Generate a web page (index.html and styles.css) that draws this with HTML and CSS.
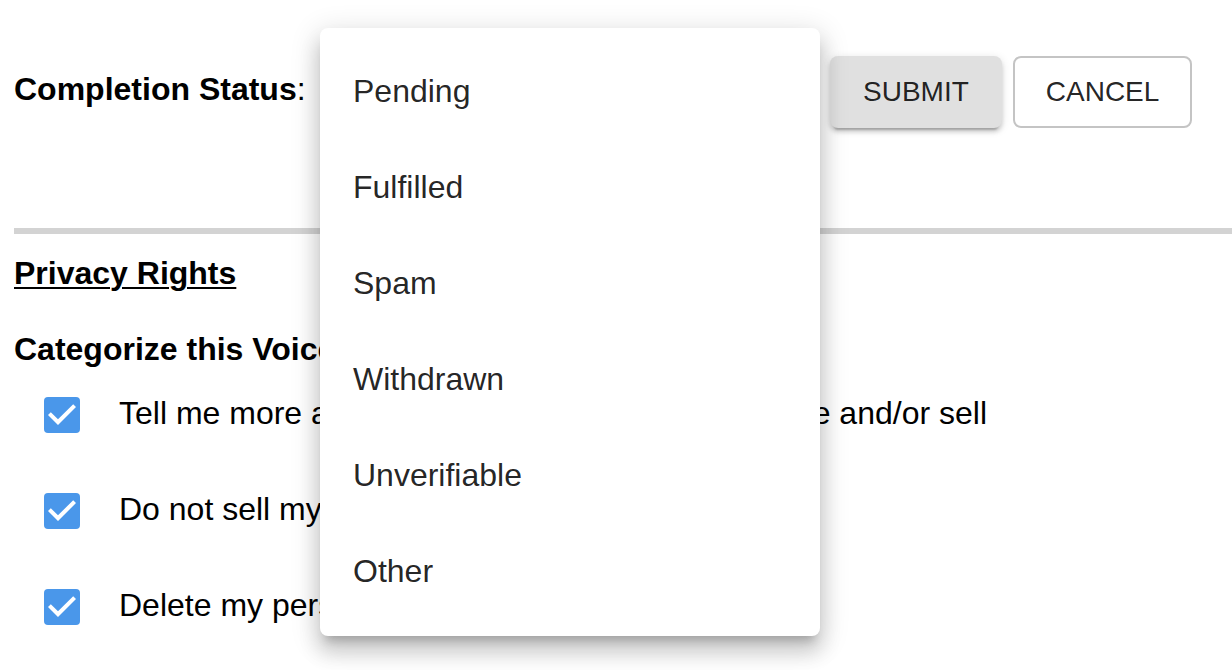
FILE: index.html
```html
<!DOCTYPE html>
<html lang="en">
<head>
<meta charset="utf-8">
<title>Completion Status</title>
<link rel="stylesheet" href="styles.css">
</head>
<body>
<div class="page">
  <div class="status-row">
    <div class="status-label"><strong>Completion Status</strong>:</div>
    <div class="select-slot"></div>
    <div class="actions">
      <button class="btn btn-contained">SUBMIT</button>
      <button class="btn btn-outlined">CANCEL</button>
    </div>
  </div>

  <hr class="divider">

  <h2 class="section-title">Privacy Rights</h2>
  <h3 class="sub-title">Categorize this Voice Request</h3>

  <ul class="checks">
    <li class="check-row">
      <svg class="checkbox" viewBox="0 0 24 24" width="48" height="48"><rect x="3" y="3" width="18" height="18" rx="2" fill="#4a97ea"/><path d="M10 17l-5-5 1.41-1.41L10 14.17l7.59-7.59L19 8l-9 9z" fill="#fff"/></svg>
      <span class="check-label">Tell me more about the information we collect, use and/or sell</span>
    </li>
    <li class="check-row">
      <svg class="checkbox" viewBox="0 0 24 24" width="48" height="48"><rect x="3" y="3" width="18" height="18" rx="2" fill="#4a97ea"/><path d="M10 17l-5-5 1.41-1.41L10 14.17l7.59-7.59L19 8l-9 9z" fill="#fff"/></svg>
      <span class="check-label">Do not sell my personal information</span>
    </li>
    <li class="check-row">
      <svg class="checkbox" viewBox="0 0 24 24" width="48" height="48"><rect x="3" y="3" width="18" height="18" rx="2" fill="#4a97ea"/><path d="M10 17l-5-5 1.41-1.41L10 14.17l7.59-7.59L19 8l-9 9z" fill="#fff"/></svg>
      <span class="check-label">Delete my personal information</span>
    </li>
  </ul>
</div>

<div class="menu">
  <ul class="menu-list">
    <li class="menu-item">Pending</li>
    <li class="menu-item">Fulfilled</li>
    <li class="menu-item">Spam</li>
    <li class="menu-item">Withdrawn</li>
    <li class="menu-item">Unverifiable</li>
    <li class="menu-item">Other</li>
  </ul>
</div>
</body>
</html>
```

FILE: styles.css
```css
html, body {
  margin: 0;
  padding: 0;
  background: #fff;
  overflow: hidden;
}

body {
  font-family: "Liberation Sans", Arial, sans-serif;
  color: #000;
  width: 1232px;
  height: 670px;
  position: relative;
}

.page {
  padding: 55px 0 0 14px;
}

.status-row {
  display: flex;
  align-items: center;
  height: 73px;
}

.status-label {
  font-size: 32px;
  width: 306px;
  padding-bottom: 4px;
}

.status-label strong {
  font-weight: 700;
}

.select-slot {
  width: 500px;
  height: 60px;
}

.actions {
  display: flex;
  align-items: center;
  gap: 11px;
  margin-left: 10px;
}

.btn {
  font-family: "Liberation Sans", Arial, sans-serif;
  font-size: 28px;
  line-height: 48px;
  color: rgba(0, 0, 0, 0.87);
  border-radius: 8px;
  cursor: pointer;
}

.btn-contained {
  background: #e0e0e0;
  border: none;
  padding: 12px 33px;
  box-shadow: 0 6px 2px -4px rgba(0,0,0,0.2), 0 4px 4px 0 rgba(0,0,0,0.14), 0 2px 10px 0 rgba(0,0,0,0.12);
}

.btn-outlined {
  background: #fff;
  border: 2px solid #c4c4c4;
  padding: 10px 31px;
}

.divider {
  margin: 100px 0 0 0;
  border: none;
  height: 6px;
  background: #d3d3d3;
}

.section-title {
  margin: 21px 0 0 0;
  font-size: 32px;
  font-weight: 700;
  text-decoration: underline;
  text-underline-offset: 3px;
  text-decoration-thickness: 2px;
  line-height: 36px;
}

.sub-title {
  margin: 40px 0 0 0;
  font-size: 32px;
  font-weight: 700;
  line-height: 36px;
}

.checks {
  list-style: none;
  margin: 0;
  padding: 0 0 0 24px;
}

.check-row {
  display: flex;
  align-items: center;
  height: 96px;
}

.checkbox {
  flex: none;
  display: block;
}

.check-label {
  margin-left: 33px;
  font-size: 32px;
  line-height: 36px;
  white-space: nowrap;
  padding-bottom: 4px;
}

.menu {
  position: absolute;
  left: 320px;
  top: 28px;
  width: 500px;
  height: 608px;
  background: #fff;
  border-radius: 8px;
  box-shadow: 0 10px 10px -6px rgba(0,0,0,0.2), 0 16px 20px 2px rgba(0,0,0,0.14), 0 6px 28px 4px rgba(0,0,0,0.12);
}

.menu-list {
  list-style: none;
  margin: 0;
  padding: 15px 0;
}

.menu-item {
  height: 96px;
  display: flex;
  align-items: center;
  padding-left: 33px;
  font-size: 32px;
  color: rgba(0, 0, 0, 0.87);
}
```
